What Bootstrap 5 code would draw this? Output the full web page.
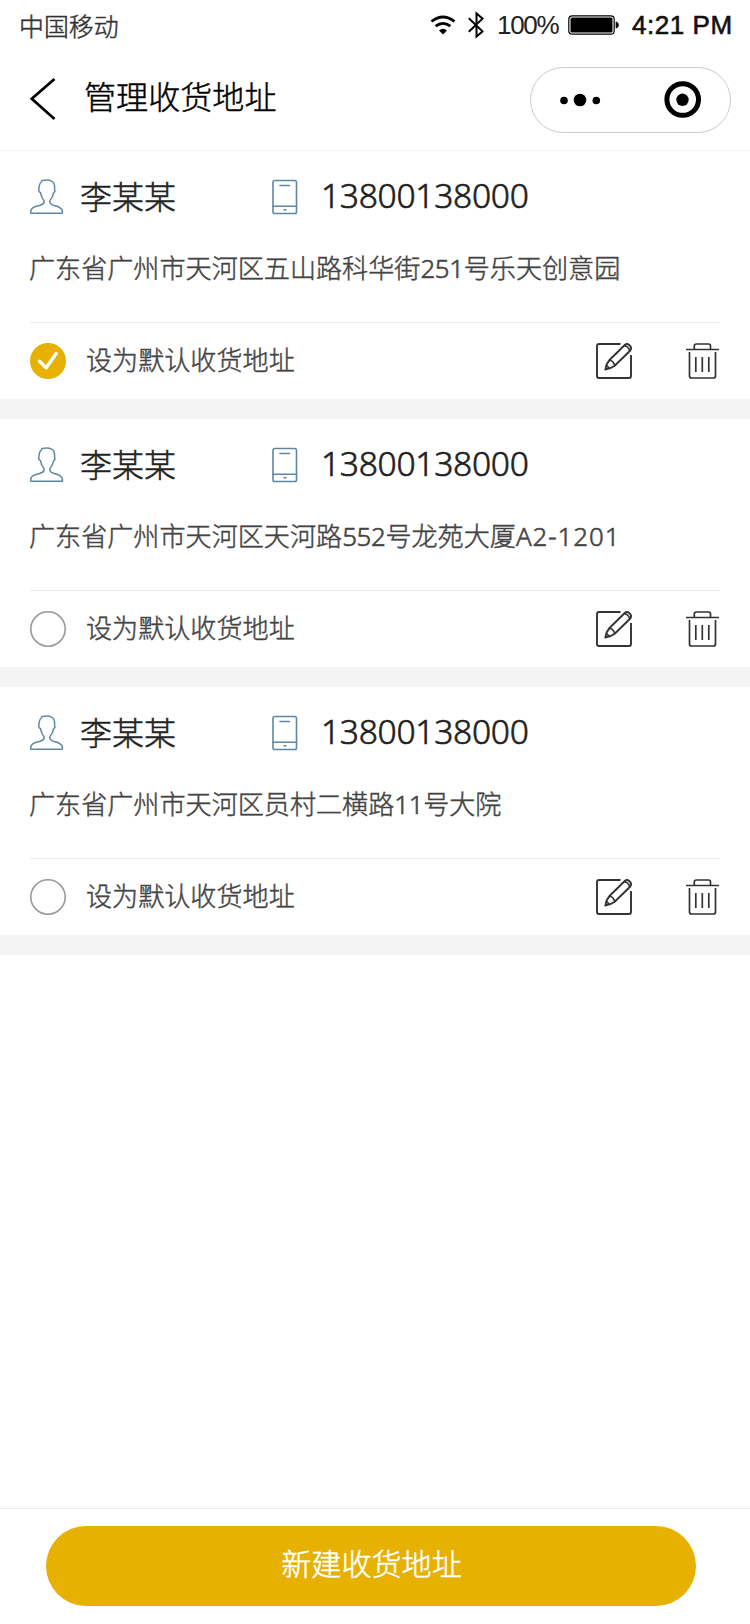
<!DOCTYPE html>
<html lang="zh-CN">
<head>
<meta charset="utf-8">
<meta name="viewport" content="width=device-width, initial-scale=1">
<title>管理收货地址</title>
<link href="https://cdn.jsdelivr.net/npm/bootstrap@5.3.0/dist/css/bootstrap.min.css" rel="stylesheet">
<style>
body{font-family:"Noto Sans CJK SC",sans-serif;font-weight:300;color:#444;background:#fff;line-height:1;-webkit-text-stroke:.45px currentColor}
svg{display:block;flex:none;fill:none}
.latin{font-family:"Noto Sans","Noto Sans CJK SC",sans-serif;font-weight:300;-webkit-text-stroke:.6px currentColor}
.status{height:50px;padding:0 18px 0 19px}
.carrier{font-size:24.9px;line-height:50px;color:#333}
.percent,.clock{font-family:"Liberation Sans",sans-serif;font-weight:400;font-size:26px;white-space:nowrap;-webkit-text-stroke:0}
.percent{width:62px;letter-spacing:-1.3px;color:#222;margin:0 9px 0 13px}
.clock{width:100px;margin-left:13px;letter-spacing:.55px;color:#111;-webkit-text-stroke:.6px #111}
.titlebar{height:101px;border-bottom:1px solid #f2f2f2;padding:17px 19px 17px 30px}
.titlebar h1{font-size:32.1px;font-weight:300;line-height:56px;color:#000;margin:0 0 0 28px}
.capsule{width:201px;height:66px;border:1px solid #ccc}
.address-card{height:268px;padding:0 30px;border-bottom:20px solid #f4f4f4}
.contact{height:92px;color:#222}
.person{width:192px;margin-left:16px;font-size:32px;padding-bottom:4px}
.phone{font-size:33.6px;letter-spacing:-.3px;margin-left:23px}
.contact .phone{padding-bottom:3px}
.place{height:79px;font-size:26.1px;line-height:49px;white-space:nowrap;margin-left:-1px}
.place .latin{font-size:25.8px;letter-spacing:-.3px}
.place .unit{letter-spacing:1px}
.options{height:77px;border-top:1px solid #ebebeb;font-size:26.1px}
.options label{margin-left:20px;flex:1;line-height:50px;padding-bottom:4px}
.icon-btn{border:0;padding:0;background:none}
.footer-bar{height:116px;border-top:1px solid #ebebeb;padding:17px 54px 0 46px}
.create{height:80px;background:#e6b100;color:#fff;font-size:30.1px;font-weight:300;line-height:1;border:0;padding:0 0 8px 1px;-webkit-text-stroke:.5px #fff}
.create:hover{background:#d9a700;color:#fff}
</style>
</head>
<body>
<svg width="0" height="0" class="position-absolute" aria-hidden="true">
<defs>
<symbol id="user" viewBox="0 0 34 36"><path d="M.7 34.200v-1.500C.7 28.500 5 27.300 9.500 26.500Q13.500 25.300 13.900 23.800V21.500C12 19.500 11 17 10.500 13.700Q8 12.500 8.900 10C9.200 6.500 9.300 4.500 10.900 3.600L12 1.600Q18 .3 21.200 1.900C24.200 3 24.900 6.500 24.500 10.500Q25.700 12.500 23.700 13.700C23.100 17 21.800 19.500 19.900 21.500V23.800Q20.500 25.300 24 26.500C28 27.300 32.400 28.500 32.400 32.700v1.500Z" stroke="#5f87a3" stroke-width="1.500" stroke-linejoin="round"/></symbol>
<symbol id="mobile" viewBox="0 0 26 36"><g stroke="#5f87a3" stroke-width="1.600" stroke-linecap="round"><rect x="1" y="1.500" width="23.500" height="33" rx="1.800"/><path d="M8 6.500h9.500M1 27.200h23.500M12 30.800h2"/></g></symbol>
<symbol id="checked" viewBox="0 0 36 36"><circle cx="18" cy="18" r="18" fill="#e6b100"/><path d="m9.500 18.200 6.700 6.500 10-14.200" stroke="#fff" stroke-width="3.400" stroke-linecap="round" stroke-linejoin="round"/></symbol>
<symbol id="unchecked" viewBox="0 0 36 36"><circle cx="18" cy="18" r="17.200" stroke="#999" stroke-width="1.600"/></symbol>
<symbol id="edit" viewBox="0 0 36 36"><g stroke="#333" stroke-width="1.900"><path d="M24.500 1H3Q1 1 1 3V33Q1 35 3 35H33Q35 35 35 33V12"/><path d="M9.300 26.500Q10 21 13.500 17L29 1.800Q31 .2 33.500 2.200T34.500 7.200L18.700 22.700Q14 26 9.300 26.500Z" stroke-linejoin="round"/><path d="M13.500 17Q18 18.500 18.700 22.700M28.300 2.500Q32.500 3.500 33.800 7.800M10.500 22.500 13.200 25.200" stroke-width="1.700"/></g></symbol>
<symbol id="trash" viewBox="0 0 34 36"><g stroke="#333" stroke-width="1.700"><path d="M0 6.500h33M8.300 6V3Q8.300 1 10.300 1H22.500Q24.500 1 24.500 3V6M3.500 9V33Q3.500 35 5.500 35H27.500Q29.500 35 29.500 33V9"/><path d="M9.800 14v15M16.300 14v15M22.800 14v15"/></g></symbol>
</defs>
</svg>
<div class="d-flex flex-column min-vh-100">
<header>
<div class="status d-flex align-items-center">
<span class="carrier me-auto">中国移动</span>
<svg width="26" height="22" viewBox="0 0 26 22"><g stroke="#000" stroke-width="2.800"><path d="M1.500 7.500Q13-1.500 24.500 7.500M5.600 12.200Q13 6.500 20.400 12.200"/></g><path d="M9 16.500Q13 13 17 16.500L13 20.500Z" fill="#000"/></svg>
<svg width="16" height="28" viewBox="0 0 16 28" style="margin-left:12px"><path d="M.8 7.200 14.500 20.400 8.500 25.500V2.500L14.500 7.600.8 20.800" stroke="#000" stroke-width="2"/></svg>
<span class="percent">100%</span>
<svg width="51" height="20" viewBox="0 0 51 20"><rect x=".8" y=".8" width="45.400" height="18.400" rx="3.500" stroke="#000" stroke-width="1.200"/><rect x="2.500" y="2.500" width="42" height="15" rx="1.500" fill="#000"/><path d="M47.700 6.500Q50.800 7.500 50.800 10T47.700 13.500Z" fill="#000"/></svg>
<span class="clock">4:21 PM</span>
</div>
<nav class="titlebar d-flex align-items-start">
<svg width="26" height="42" viewBox="0 0 26 42" style="margin-top:11px"><path d="M24.500 1 1.800 20.800 24.500 41" stroke="#000" stroke-width="2.700"/></svg>
<h1>管理收货地址</h1>
<div class="capsule rounded-pill ms-auto"><svg width="199" height="64" viewBox="0 0 199 64"><g fill="#000"><circle cx="33" cy="32.500" r="3.800"/><circle cx="49" cy="32" r="6.300"/><circle cx="65.300" cy="32.500" r="3.800"/><circle cx="151.500" cy="31.800" r="6.200"/></g><circle cx="151.700" cy="31.500" r="15.800" stroke="#000" stroke-width="5"/></svg></div>
</nav>
</header>
<main class="flex-grow-1">
<section class="address-card">
<div class="contact d-flex align-items-center"><svg width="34" height="36"><use href="#user"/></svg><span class="person">李某某</span><svg width="26" height="36"><use href="#mobile"/></svg><span class="phone latin">13800138000</span></div>
<div class="place">广东省广州市天河区五山路科华街<span class="latin">251</span>号乐天创意园</div>
<div class="options d-flex align-items-center"><svg width="36" height="36"><use href="#checked"/></svg><label>设为默认收货地址</label><button class="icon-btn" aria-label="编辑"><svg width="36" height="36"><use href="#edit"/></svg></button><button class="icon-btn" aria-label="删除" style="margin-left:54px"><svg width="34" height="36"><use href="#trash"/></svg></button></div>
</section>
<section class="address-card">
<div class="contact d-flex align-items-center"><svg width="34" height="36"><use href="#user"/></svg><span class="person">李某某</span><svg width="26" height="36"><use href="#mobile"/></svg><span class="phone latin">13800138000</span></div>
<div class="place">广东省广州市天河区天河路<span class="latin">552</span>号龙苑大厦<span class="latin unit">A2-1201</span></div>
<div class="options d-flex align-items-center"><svg width="36" height="36"><use href="#unchecked"/></svg><label>设为默认收货地址</label><button class="icon-btn" aria-label="编辑"><svg width="36" height="36"><use href="#edit"/></svg></button><button class="icon-btn" aria-label="删除" style="margin-left:54px"><svg width="34" height="36"><use href="#trash"/></svg></button></div>
</section>
<section class="address-card">
<div class="contact d-flex align-items-center"><svg width="34" height="36"><use href="#user"/></svg><span class="person">李某某</span><svg width="26" height="36"><use href="#mobile"/></svg><span class="phone latin">13800138000</span></div>
<div class="place">广东省广州市天河区员村二横路<span class="latin">11</span>号大院</div>
<div class="options d-flex align-items-center"><svg width="36" height="36"><use href="#unchecked"/></svg><label>设为默认收货地址</label><button class="icon-btn" aria-label="编辑"><svg width="36" height="36"><use href="#edit"/></svg></button><button class="icon-btn" aria-label="删除" style="margin-left:54px"><svg width="34" height="36"><use href="#trash"/></svg></button></div>
</section>
</main>
<footer class="footer-bar"><button class="create btn rounded-pill w-100">新建收货地址</button></footer>
</div>
<script src="https://cdn.jsdelivr.net/npm/bootstrap@5.3.0/dist/js/bootstrap.bundle.min.js"></script>
</body>
</html>
